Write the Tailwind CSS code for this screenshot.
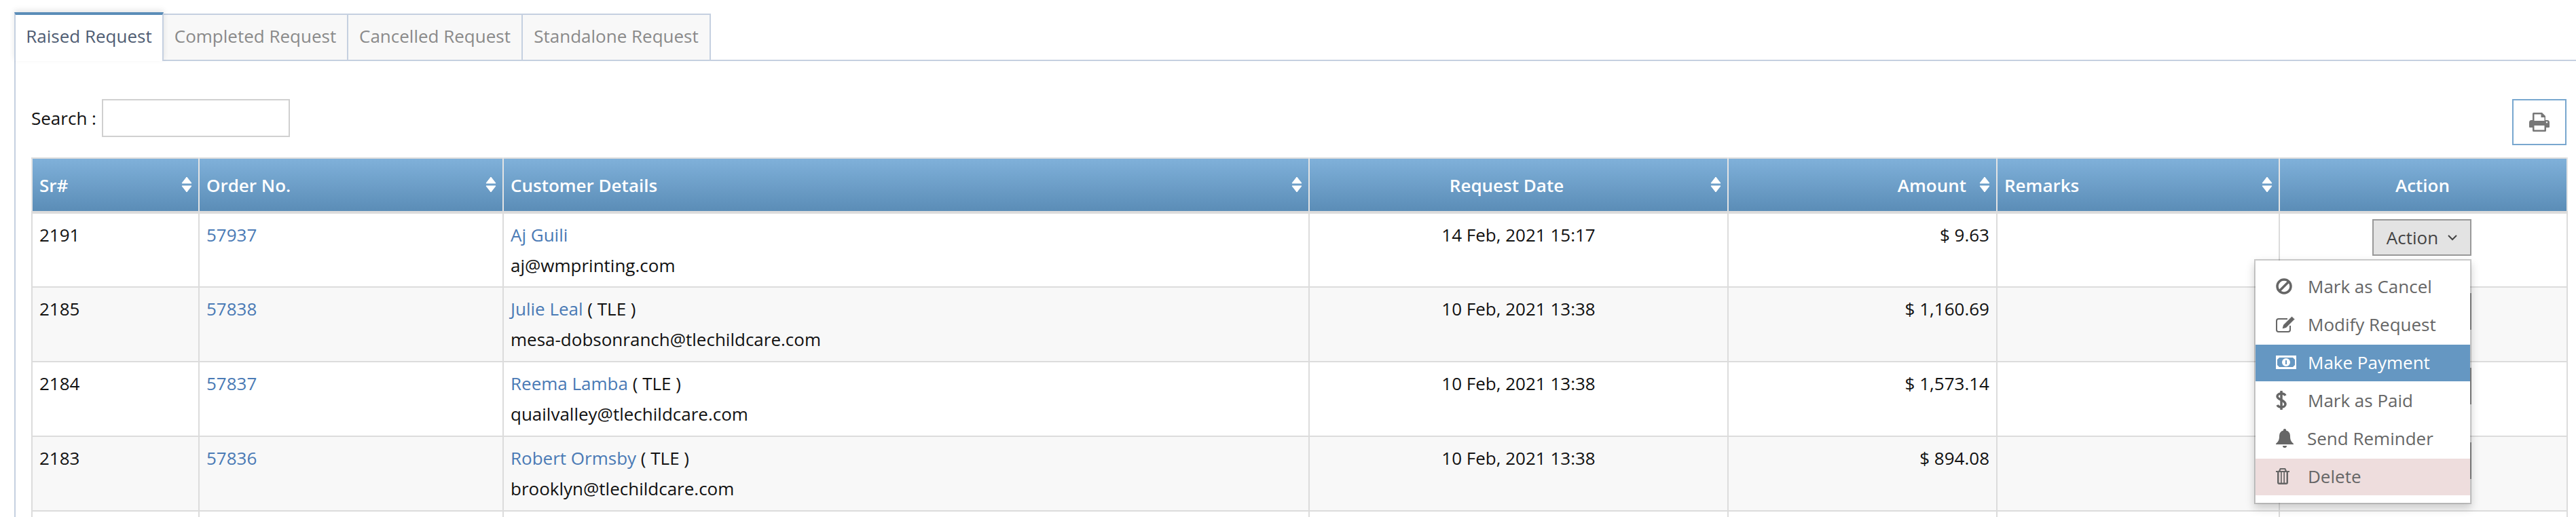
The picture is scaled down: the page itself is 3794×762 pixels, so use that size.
<!DOCTYPE html>
<html lang="en">
<head>
    <meta charset="UTF-8">
    <title>Raised Request</title>
    <script src="https://cdn.jsdelivr.net/npm/@tailwindcss/browser@4"></script>
</head>
<body class="bg-white">
<div class="relative w-[3794px] h-[762px] overflow-hidden font-['Open_Sans',sans-serif] text-[26px] leading-[38px] text-[#111]">

    <!-- Tabs -->
    <div class="flex items-end h-[90px] pl-[21px]">
        <div class="relative z-10 w-[220px] h-[72px] bg-white border-t-[4px] border-t-[#5b8db8] border-x-2 border-x-[#c5d0e0] text-[#4f5d73] text-center leading-[62px] shadow-[0_-3px_8px_rgba(0,0,0,0.1)]">Raised Request</div>
        <div class="w-[272px] h-[70px] bg-[#f8f8f8] border-y-2 border-r-2 border-[#c5d0e0] text-[#8a8a8a] text-center leading-[62px]">Completed Request</div>
        <div class="w-[257px] h-[70px] bg-[#f8f8f8] border-y-2 border-r-2 border-[#c5d0e0] text-[#8a8a8a] text-center leading-[62px]">Cancelled Request</div>
        <div class="w-[277px] h-[70px] bg-[#f8f8f8] border-y-2 border-r-2 border-[#c5d0e0] text-[#8a8a8a] text-center leading-[62px]">Standalone Request</div>
        <div class="flex-1 h-[2px] bg-[#c5d0e0]"></div>
    </div>

    <!-- Panel -->
    <div class="ml-[21px] h-[672px] border-l-2 border-[#c5d0e0] pl-[23px] pr-[14px] pt-[56px]">
        <div class="flex items-start justify-between h-[86px]">
            <div class="flex items-center gap-[8px] h-[56px]">
                <span>Search :</span>
                <input type="text" class="w-[277px] h-[56px] bg-white border-2 border-[#d0d0d0]">
            </div>
            <button class="flex items-center justify-center w-[80px] h-[68px] bg-white border-2 border-[#78a7cf]">
                <svg class="w-[30px] h-[28px]" viewBox="0 0 30 28" fill="#777">
                    <path fill-rule="evenodd" d="M5 1.500A1.500 1.500 0 0 1 6.500 0H19l5 5v6h2.500A3.500 3.500 0 0 1 30 14.500V21a1 1 0 0 1-1 1h-4v4.500a1.500 1.500 0 0 1-1.500 1.500h-17A1.500 1.500 0 0 1 5 26.500V22H1a1 1 0 0 1-1-1v-6.500A3.500 3.500 0 0 1 3.500 11H5zM7.500 2.500V12h15V7h-5V2.500zM7.500 19v6.500h15V19zM26 13a1.200 1.200 0 1 0 .01 0z"/>
                </svg>
            </button>
        </div>

        <table class="w-[3734px] table-fixed border-collapse">
            <colgroup>
                <col class="w-[246px]"><col class="w-[448px]"><col class="w-[1187px]"><col class="w-[617px]"><col class="w-[396px]"><col class="w-[416px]"><col class="w-[424px]">
            </colgroup>
            <thead>
                <tr class="h-[80px] bg-gradient-to-b from-[#80b1da] to-[#5a8cb6] text-white font-semibold">
                    <th class="relative border-x-2 border-t-2 border-b-4 border-x-[#e4e4e4] border-y-[#dcdcdc] px-[10px] text-left font-semibold">Sr#
                        <svg class="absolute right-[9px] top-[27px] w-[16px] h-[22px]" viewBox="0 0 16 22" fill="#fff"><path d="M8 0l7 9H1zM8 22L1 13h14z" stroke="#fff" stroke-linejoin="round"/></svg>
                    </th>
                    <th class="relative border-x-2 border-t-2 border-b-4 border-x-[#e4e4e4] border-y-[#dcdcdc] px-[10px] text-left font-semibold">Order No.
                        <svg class="absolute right-[9px] top-[27px] w-[16px] h-[22px]" viewBox="0 0 16 22" fill="#fff"><path d="M8 0l7 9H1zM8 22L1 13h14z" stroke="#fff" stroke-linejoin="round"/></svg>
                    </th>
                    <th class="relative border-x-2 border-t-2 border-b-4 border-x-[#e4e4e4] border-y-[#dcdcdc] px-[10px] text-left font-semibold">Customer Details
                        <svg class="absolute right-[9px] top-[27px] w-[16px] h-[22px]" viewBox="0 0 16 22" fill="#fff"><path d="M8 0l7 9H1zM8 22L1 13h14z" stroke="#fff" stroke-linejoin="round"/></svg>
                    </th>
                    <th class="relative border-x-2 border-t-2 border-b-4 border-x-[#e4e4e4] border-y-[#dcdcdc] pl-[10px] pr-[45px] text-center font-semibold">Request Date
                        <svg class="absolute right-[9px] top-[27px] w-[16px] h-[22px]" viewBox="0 0 16 22" fill="#fff"><path d="M8 0l7 9H1zM8 22L1 13h14z" stroke="#fff" stroke-linejoin="round"/></svg>
                    </th>
                    <th class="relative border-x-2 border-t-2 border-b-4 border-x-[#e4e4e4] border-y-[#dcdcdc] pl-[10px] pr-[44px] text-right font-semibold">Amount
                        <svg class="absolute right-[9px] top-[27px] w-[16px] h-[22px]" viewBox="0 0 16 22" fill="#fff"><path d="M8 0l7 9H1zM8 22L1 13h14z" stroke="#fff" stroke-linejoin="round"/></svg>
                    </th>
                    <th class="relative border-x-2 border-t-2 border-b-4 border-x-[#e4e4e4] border-y-[#dcdcdc] px-[10px] text-left font-semibold">Remarks
                        <svg class="absolute right-[9px] top-[27px] w-[16px] h-[22px]" viewBox="0 0 16 22" fill="#fff"><path d="M8 0l7 9H1zM8 22L1 13h14z" stroke="#fff" stroke-linejoin="round"/></svg>
                    </th>
                    <th class="border-x-2 border-t-2 border-b-4 border-x-[#e4e4e4] border-y-[#dcdcdc] pl-[10px] pr-[12px] text-center font-semibold">Action</th>
                </tr>
            </thead>
            <tbody>
                <tr class="h-[110px] bg-white align-top">
                    <td class="border-2 border-[#dcdcdc] px-[10px] pt-[12px]">2191</td>
                    <td class="border-2 border-[#dcdcdc] px-[10px] pt-[12px]"><a class="text-[#4a7ab5]">57937</a></td>
                    <td class="border-2 border-[#dcdcdc] px-[10px] pt-[12px]"><a class="text-[#4a7ab5]">Aj Guili</a><div class="mt-[7px]">aj@wmprinting.com</div></td>
                    <td class="border-2 border-[#dcdcdc] px-[10px] pt-[12px] text-center">14 Feb, 2021 15:17</td>
                    <td class="border-2 border-[#dcdcdc] px-[10px] pt-[12px] text-right">$ 9.63</td>
                    <td class="border-2 border-[#dcdcdc] px-[10px] pt-[12px]"></td>
                    <td class="border-2 border-[#dcdcdc] pl-[10px] pr-[14px] pt-[8px] text-center"><button class="inline-flex items-center justify-center gap-[14px] w-[146px] h-[54px] bg-[#e3e3e3] border-2 border-[#999] text-[#444]">Action
                        <svg class="w-[14px] h-[9px]" viewBox="0 0 14 9" fill="none" stroke="#444" stroke-width="2"><path d="M1 1l6 6 6-6"/></svg></button></td>
                </tr>
                <tr class="h-[110px] bg-[#f8f8f8] align-top">
                    <td class="border-2 border-[#dcdcdc] px-[10px] pt-[12px]">2185</td>
                    <td class="border-2 border-[#dcdcdc] px-[10px] pt-[12px]"><a class="text-[#4a7ab5]">57838</a></td>
                    <td class="border-2 border-[#dcdcdc] px-[10px] pt-[12px]"><a class="text-[#4a7ab5]">Julie Leal</a> ( TLE )<div class="mt-[7px]">mesa-dobsonranch@tlechildcare.com</div></td>
                    <td class="border-2 border-[#dcdcdc] px-[10px] pt-[12px] text-center">10 Feb, 2021 13:38</td>
                    <td class="border-2 border-[#dcdcdc] px-[10px] pt-[12px] text-right">$ 1,160.69</td>
                    <td class="border-2 border-[#dcdcdc] px-[10px] pt-[12px]"></td>
                    <td class="border-2 border-[#dcdcdc] pl-[10px] pr-[14px] pt-[8px] text-center"><button class="inline-flex items-center justify-center gap-[14px] w-[146px] h-[54px] bg-[#e3e3e3] border-2 border-[#999] text-[#444]">Action
                        <svg class="w-[14px] h-[9px]" viewBox="0 0 14 9" fill="none" stroke="#444" stroke-width="2"><path d="M1 1l6 6 6-6"/></svg></button></td>
                </tr>
                <tr class="h-[110px] bg-white align-top">
                    <td class="border-2 border-[#dcdcdc] px-[10px] pt-[12px]">2184</td>
                    <td class="border-2 border-[#dcdcdc] px-[10px] pt-[12px]"><a class="text-[#4a7ab5]">57837</a></td>
                    <td class="border-2 border-[#dcdcdc] px-[10px] pt-[12px]"><a class="text-[#4a7ab5]">Reema Lamba</a> ( TLE )<div class="mt-[7px]">quailvalley@tlechildcare.com</div></td>
                    <td class="border-2 border-[#dcdcdc] px-[10px] pt-[12px] text-center">10 Feb, 2021 13:38</td>
                    <td class="border-2 border-[#dcdcdc] px-[10px] pt-[12px] text-right">$ 1,573.14</td>
                    <td class="border-2 border-[#dcdcdc] px-[10px] pt-[12px]"></td>
                    <td class="border-2 border-[#dcdcdc] pl-[10px] pr-[14px] pt-[8px] text-center"><button class="inline-flex items-center justify-center gap-[14px] w-[146px] h-[54px] bg-[#e3e3e3] border-2 border-[#999] text-[#444]">Action
                        <svg class="w-[14px] h-[9px]" viewBox="0 0 14 9" fill="none" stroke="#444" stroke-width="2"><path d="M1 1l6 6 6-6"/></svg></button></td>
                </tr>
                <tr class="h-[110px] bg-[#f8f8f8] align-top">
                    <td class="border-2 border-[#dcdcdc] px-[10px] pt-[12px]">2183</td>
                    <td class="border-2 border-[#dcdcdc] px-[10px] pt-[12px]"><a class="text-[#4a7ab5]">57836</a></td>
                    <td class="border-2 border-[#dcdcdc] px-[10px] pt-[12px]"><a class="text-[#4a7ab5]">Robert Ormsby</a> ( TLE )<div class="mt-[7px]">brooklyn@tlechildcare.com</div></td>
                    <td class="border-2 border-[#dcdcdc] px-[10px] pt-[12px] text-center">10 Feb, 2021 13:38</td>
                    <td class="border-2 border-[#dcdcdc] px-[10px] pt-[12px] text-right">$ 894.08</td>
                    <td class="border-2 border-[#dcdcdc] px-[10px] pt-[12px]"></td>
                    <td class="border-2 border-[#dcdcdc] pl-[10px] pr-[14px] pt-[8px] text-center"><button class="inline-flex items-center justify-center gap-[14px] w-[146px] h-[54px] bg-[#e3e3e3] border-2 border-[#999] text-[#444]">Action
                        <svg class="w-[14px] h-[9px]" viewBox="0 0 14 9" fill="none" stroke="#444" stroke-width="2"><path d="M1 1l6 6 6-6"/></svg></button></td>
                </tr>
                <tr class="h-[110px] bg-white">
                    <td class="border-2 border-[#dcdcdc]"></td><td class="border-2 border-[#dcdcdc]"></td><td class="border-2 border-[#dcdcdc]"></td><td class="border-2 border-[#dcdcdc]"></td><td class="border-2 border-[#dcdcdc]"></td><td class="border-2 border-[#dcdcdc]"></td><td class="border-2 border-[#dcdcdc]"></td>
                </tr>
            </tbody>
        </table>
    </div>

    <!-- Action dropdown, open over the rows -->
    <div class="absolute z-20 left-[3320px] top-[382px] w-[320px] h-[361px] bg-white border-2 border-black/20 bg-clip-padding pt-[12px] text-[#666] shadow-[0_6px_12px_rgba(0,0,0,0.18)]">
        <div class="flex items-center h-[54px] mb-[2px] pl-[30px] pb-[2px]">
            <svg class="w-[24px] h-[24px] mr-[23px]" viewBox="0 0 24 24" fill="none" stroke="#666" stroke-width="3.500"><circle cx="12" cy="12" r="10"/><path d="M5 19L19 5"/></svg>Mark as Cancel
        </div>
        <div class="flex items-center h-[54px] mb-[2px] pl-[30px] pb-[2px]">
            <svg class="w-[28px] h-[24px] mr-[19px]" viewBox="0 0 28 24" fill="none" stroke="#666" stroke-width="2"><path d="M21 14v6a3 3 0 0 1-3 3H4a3 3 0 0 1-3-3V7a3 3 0 0 1 3-3h13"/><path fill="#666" stroke="#fff" stroke-width="1" d="M23.500 0L28 4.500 15 17.500l-6 1.500 1.500-6z"/></svg>Modify Request
        </div>
        <div class="flex items-center h-[54px] mb-[2px] pl-[30px] pb-[2px] bg-[#6597c2] text-white">
            <svg class="w-[30px] h-[20px] mr-[17px]" viewBox="0 0 30 20" fill="#fff"><path fill-rule="evenodd" d="M0 0h30v20H0zM5 3L2 6v8l3 3h20l3-3V6l-3-3zM15 4a6 6 0 1 1 0 12 6 6 0 0 1 0-12z"/><path d="M14 7h2v6h-2z" fill="#6597c2"/></svg>Make Payment
        </div>
        <div class="flex items-center h-[54px] mb-[2px] pl-[30px] pb-[2px]">
            <svg class="w-[16px] h-[30px] mr-[31px]" viewBox="0 0 16 30" fill="none" stroke="#666" stroke-width="3.500"><path d="M14 8c-1-2-3.500-3-6-3S2 6.500 2 9c0 6 12 5 12 12 0 2.500-3 4-6 4s-5-1-6-3"/><path d="M8 1v28"/></svg>Mark as Paid
        </div>
        <div class="flex items-center h-[54px] mb-[2px] pl-[30px] pb-[2px]">
            <svg class="w-[26px] h-[28px] mr-[20px]" viewBox="0 0 26 28" fill="#666"><path d="M13 0a2 2 0 0 1 2 2.400c4 .9 6 4 6 8.600 0 6 2 8.500 5 11v1H0v-1c3-2.500 5-5 5-11 0-4.600 2-7.700 6-8.600A2 2 0 0 1 13 0zM10 25h6a3 3 0 0 1-6 0z"/></svg>Send Reminder
        </div>
        <div class="flex items-center h-[54px] pl-[30px] pb-[2px] bg-[#eedddd]">
            <svg class="w-[20px] h-[24px] mr-[27px]" viewBox="0 0 20 24" fill="#666"><path fill-rule="evenodd" d="M6 0h8l2 4h4v2h-2v15a3 3 0 0 1-3 3H5a3 3 0 0 1-3-3V6H0V4h4zM7.300 2L6.500 4h7l-.8-2zM4.500 6v15a.5.5 0 0 0 .5.500h2V6zM8.700 6v15.500h2.600V6zM13 6v15.500h2a.5.5 0 0 0 .5-.500V6z"/></svg>Delete
        </div>
    </div>
</div>
</body>
</html>
